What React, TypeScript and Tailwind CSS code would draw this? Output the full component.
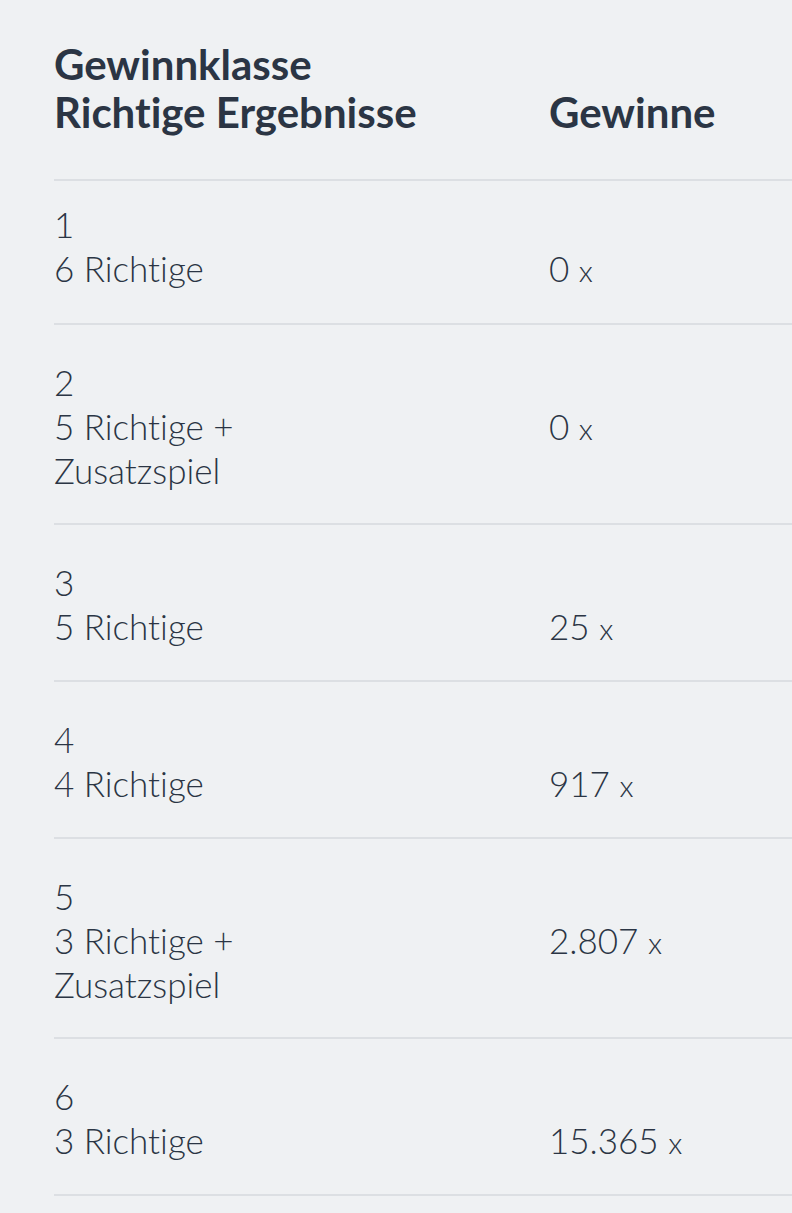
const rows = [
  { klasse: "1", lines: ["6 Richtige"], wins: "0", first: true },
  { klasse: "2", lines: ["5 Richtige +", "Zusatzspiel"], wins: "0" },
  { klasse: "3", lines: ["5 Richtige"], wins: "25" },
  { klasse: "4", lines: ["4 Richtige"], wins: "917" },
  { klasse: "5", lines: ["3 Richtige +", "Zusatzspiel"], wins: "2.807" },
  { klasse: "6", lines: ["3 Richtige"], wins: "15.365" },
]

export default function App() {
  return (
    <div
      className="min-h-[1213px] w-[792px] overflow-hidden bg-[#eff1f3] pl-[54px] pt-[40px] text-[#2b3544] [font-variant-ligatures:none]"
      style={{ fontFamily: "Lato, 'Open Sans', sans-serif" }}
    >
      <div className="flex items-end border-b-2 border-[#dcdfe3] pb-[43px] text-[42px] font-bold leading-[48px]">
        <div className="w-[495px]">
          <div>Gewinnklasse</div>
          <div>Richtige Ergebnisse</div>
        </div>
        <div>Gewinne</div>
      </div>
      {rows.map((r) => (
        <div
          key={r.klasse}
          className={
            "flex border-b-2 border-[#dcdfe3] text-[35px] font-light leading-[44px] " +
            (r.first
              ? "pt-[21px] pb-[31px]"
              : r.lines.length > 1
                ? "pt-[35px] pb-[31px]"
                : "pt-[35px] pb-[30px]")
          }
        >
          <div className="w-[495px]">
            <div>{r.klasse}</div>
            {r.lines.map((l) => (
              <div key={l}>{l}</div>
            ))}
          </div>
          <div>
            <div className="h-[44px]" />
            <div>
              {r.wins} <span className="text-[30px]">x</span>
            </div>
          </div>
        </div>
      ))}
    </div>
  )
}
